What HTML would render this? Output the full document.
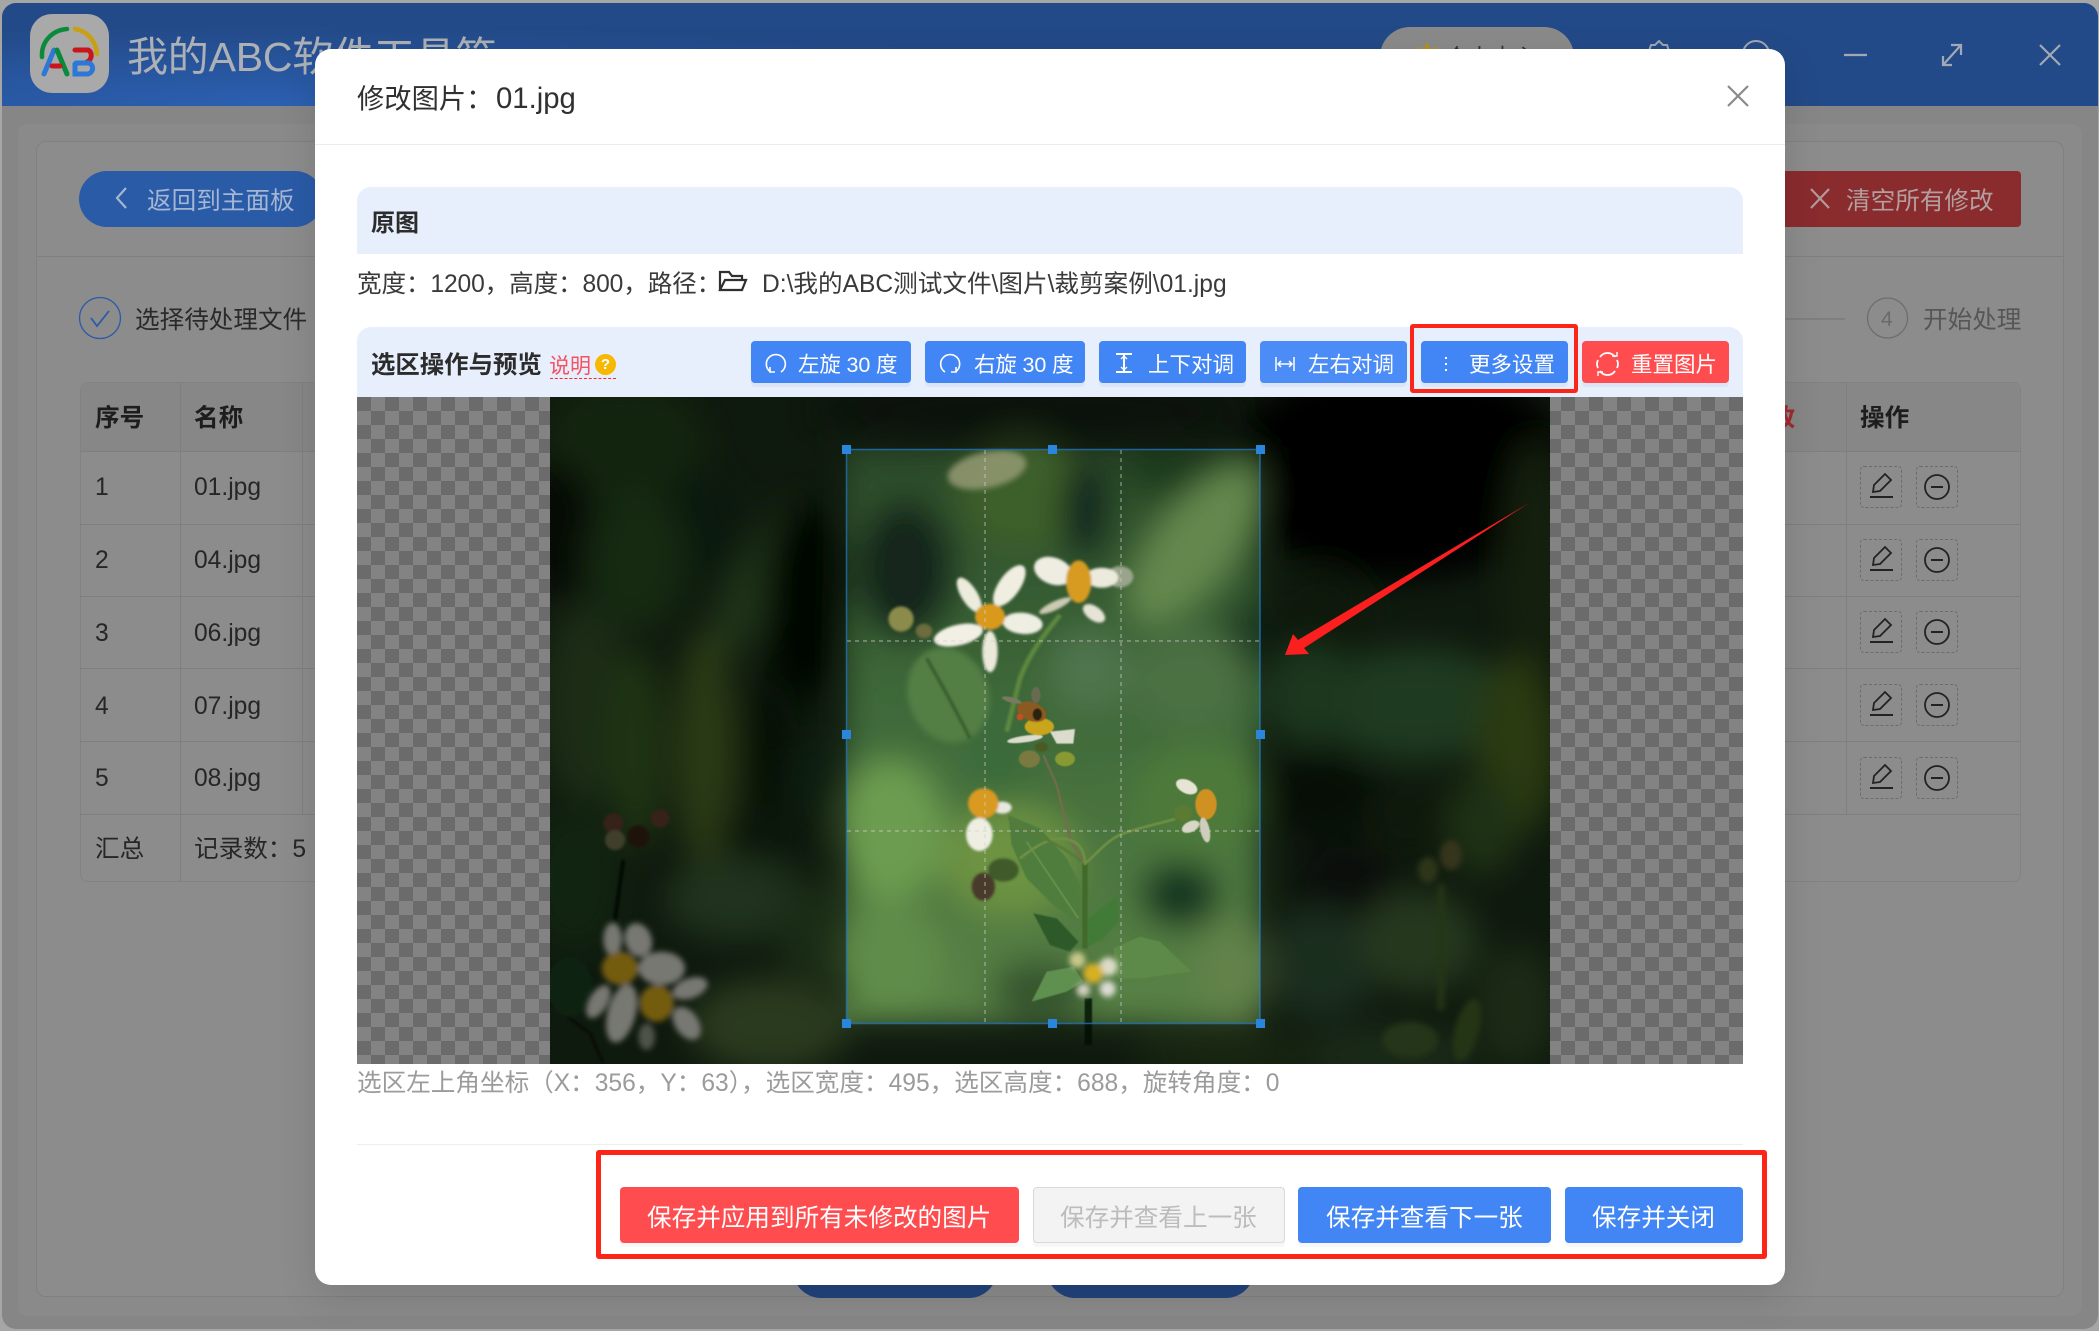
<!DOCTYPE html>
<html lang="zh"><head><meta charset="utf-8"><title>修改图片</title>
<style>
html,body{margin:0;padding:0;background:#a6a6a6}
body{position:relative;width:2099px;height:1331px;overflow:hidden;font-family:"Liberation Sans","Noto Sans CJK SC",sans-serif;color:#262626}
.a{position:absolute}
.t{position:absolute;white-space:nowrap;line-height:40px;font-size:24.6px;margin-top:2.5px}
.b{font-weight:700}
.btn{position:absolute;border-radius:4px;box-shadow:0 4px 0 rgba(60,100,180,.07)}
.line{position:absolute;background:#7f7f7f}
.act{position:absolute;width:42px;height:42px;box-sizing:border-box;border:1px dashed #6c6c6c;border-radius:4px}
svg{position:absolute;overflow:visible}
</style></head><body>

<!-- background window -->
<div class="a" style="left:2px;top:3px;width:2096px;height:1326px;border-radius:14px;background:#868686;overflow:hidden">
  <div class="a" style="left:0;top:0;width:100%;height:103px;background:radial-gradient(ellipse 900px 80px at 300px 103px,#2c60b2,rgba(44,96,178,0)),#234a88"></div>
  <div class="a" style="left:16px;top:121px;width:2064px;height:1192px;background:#8a8a8a;border-radius:10px"></div>
  <div class="a" style="left:34px;top:138px;width:2028px;height:1156px;background:#8c8c8c;border:1px solid #808080;border-radius:10px;box-sizing:border-box"></div>
</div>
<div class="line" style="left:36px;top:256px;width:2028px;height:1px"></div>

<!-- logo -->
<div class="a" style="left:30px;top:14px;width:79px;height:79px;border-radius:22px;background:#a9a9a9"></div>
<svg style="left:0;top:0" width="130" height="100" fill="none" stroke-linecap="round">
  <path d="M42 57C41 41 53 30 67 29" stroke="#0a8a3a" stroke-width="4.5"/>
  <path d="M75 29C88 31 96 42 97 54" stroke="#c9a012" stroke-width="4.5"/>
  <path d="M44 74L54 50" stroke="#2c78d8" stroke-width="5"/>
  <path d="M57 50L67 74" stroke="#0a8a3a" stroke-width="5"/>
  <path d="M52 66H60" stroke="#c8161c" stroke-width="5"/>
  <path d="M75 50H88C93 52 92 60 87 62" stroke="#c8161c" stroke-width="5"/>
  <path d="M75 64V74H88C94 72 94 65 89 63H76" stroke="#2c78d8" stroke-width="5"/>
</svg>
<div class="t" style="left:127px;top:34px;font-size:41px;color:#adb1b6;letter-spacing:-.2px">我的ABC软件工具箱</div>

<!-- header right -->
<div class="a" style="left:1380px;top:27px;width:194px;height:60px;border-radius:30px;background:#8a8a8a"></div>
<div class="t" style="left:1445px;top:34px;font-size:23px;color:#333">个人中心</div>
<svg style="left:1414px;top:40px" width="26" height="14"><path d="M2 14L4 6L9 10L13 2L17 10L22 6L24 14Z" fill="#b8901e"/></svg>
<svg style="left:1640px;top:38px" width="140" height="20" fill="none" stroke="#9fa6b2" stroke-width="2"><path d="M8 16L11 7H15L19 3L23 7H27L30 16"/><circle cx="116" cy="16" r="13"/></svg>
<svg style="left:1840px;top:40px" width="230" height="30" fill="none" stroke="#a3a9b4" stroke-width="2.2">
  <path d="M4 15H27"/>
  <path d="M103 25L121 5M111 5H121V15M103 16V25H112"/>
  <path d="M200 5L220 25M220 5L200 25"/>
</svg>

<!-- toolbar behind -->
<div class="a" style="left:79px;top:171px;width:244px;height:56px;border-radius:28px;background:#2a5ba7"></div>
<svg style="left:112px;top:185px" width="20" height="26" fill="none" stroke="#a4b6d3" stroke-width="2.2"><path d="M14 3L5 13L14 23"/></svg>
<div class="t" style="left:147px;top:179px;color:#a4b6d3">返回到主面板</div>
<div class="a" style="left:1700px;top:171px;width:321px;height:56px;border-radius:4px;background:#8a2b2e"></div>
<svg style="left:1808px;top:187px" width="24" height="24" fill="none" stroke="#b39a9a" stroke-width="2.2"><path d="M3 2L21 21M21 2L3 21"/></svg>
<div class="t" style="left:1846px;top:179px;color:#b39f9f">清空所有修改</div>

<!-- steps -->
<svg style="left:78px;top:296px" width="44" height="44" fill="none"><circle cx="22" cy="22" r="20.5" stroke="#2a5ba7" stroke-width="1.3"/><path d="M13 22L19 30L31 15" stroke="#2a5ba7" stroke-width="1.800"/></svg>
<div class="t" style="left:135px;top:298px;color:#2a2a2a">选择待处理文件</div>
<div class="line" style="left:1780px;top:318px;width:65px;height:2px"></div>
<svg style="left:1866px;top:297px" width="44" height="44" fill="none"><circle cx="21.500" cy="21" r="20" stroke="#6e6e6e" stroke-width="1.3"/></svg>
<div class="t" style="left:1881px;top:297px;font-size:21px;color:#6a6a6a">4</div>
<div class="t" style="left:1923px;top:298px;color:#565656">开始处理</div>

<!-- table -->
<div class="a" style="left:80px;top:382px;width:1941px;height:500px;box-sizing:border-box;border:1px solid #828282;border-radius:8px;background:#8c8c8c"></div>
<div class="a" style="left:81px;top:383px;width:1939px;height:68px;background:#878787;border-radius:8px 8px 0 0"></div>
<div class="line" style="left:80px;top:451px;width:1941px;height:1px"></div>
<div class="line" style="left:80px;top:524px;width:1941px;height:1px"></div>
<div class="line" style="left:80px;top:596px;width:1941px;height:1px"></div>
<div class="line" style="left:80px;top:668px;width:1941px;height:1px"></div>
<div class="line" style="left:80px;top:741px;width:1941px;height:1px"></div>
<div class="line" style="left:80px;top:814px;width:1941px;height:1px"></div>
<div class="line" style="left:180px;top:382px;width:1px;height:500px"></div>
<div class="line" style="left:302px;top:382px;width:1px;height:432px"></div>
<div class="line" style="left:1846px;top:382px;width:1px;height:432px"></div>
<div class="t b" style="left:95px;top:396px;color:#1d1d1d">序号</div>
<div class="t b" style="left:194px;top:396px;color:#1d1d1d">名称</div>
<div class="t b" style="left:1746px;top:396px;color:#a02a30">修改</div>
<div class="t b" style="left:1860px;top:396px;color:#1d1d1d">操作</div>
<div class="t" style="left:95px;top:465px">1</div><div class="t" style="left:194px;top:465px">01.jpg</div>
<div class="t" style="left:95px;top:538px">2</div><div class="t" style="left:194px;top:538px">04.jpg</div>
<div class="t" style="left:95px;top:611px">3</div><div class="t" style="left:194px;top:611px">06.jpg</div>
<div class="t" style="left:95px;top:684px">4</div><div class="t" style="left:194px;top:684px">07.jpg</div>
<div class="t" style="left:95px;top:756px">5</div><div class="t" style="left:194px;top:756px">08.jpg</div>
<div class="t" style="left:95px;top:827px">汇总</div><div class="t" style="left:194px;top:827px">记录数：5</div>

<div class="act" style="left:1860px;top:466px"></div><div class="act" style="left:1916px;top:466px"></div>
<div class="act" style="left:1860px;top:539px"></div><div class="act" style="left:1916px;top:539px"></div>
<div class="act" style="left:1860px;top:611px"></div><div class="act" style="left:1916px;top:611px"></div>
<div class="act" style="left:1860px;top:684px"></div><div class="act" style="left:1916px;top:684px"></div>
<div class="act" style="left:1860px;top:757px"></div><div class="act" style="left:1916px;top:757px"></div>
<svg style="left:1860px;top:466px" width="100" height="340" fill="none" stroke="#222" stroke-width="1.8">
  <g><path d="M10 31H33" stroke-width="2"/><path d="M13 26L14 19L25 8L31 14L20 25Z"/><circle cx="77" cy="21" r="12"/><path d="M71 21H83" stroke-width="2"/></g>
  <g transform="translate(0,73)"><path d="M10 31H33" stroke-width="2"/><path d="M13 26L14 19L25 8L31 14L20 25Z"/><circle cx="77" cy="21" r="12"/><path d="M71 21H83" stroke-width="2"/></g>
  <g transform="translate(0,145)"><path d="M10 31H33" stroke-width="2"/><path d="M13 26L14 19L25 8L31 14L20 25Z"/><circle cx="77" cy="21" r="12"/><path d="M71 21H83" stroke-width="2"/></g>
  <g transform="translate(0,218)"><path d="M10 31H33" stroke-width="2"/><path d="M13 26L14 19L25 8L31 14L20 25Z"/><circle cx="77" cy="21" r="12"/><path d="M71 21H83" stroke-width="2"/></g>
  <g transform="translate(0,291)"><path d="M10 31H33" stroke-width="2"/><path d="M13 26L14 19L25 8L31 14L20 25Z"/><circle cx="77" cy="21" r="12"/><path d="M71 21H83" stroke-width="2"/></g>
</svg>

<!-- bottom blue buttons behind -->
<div class="a" style="left:793px;top:1230px;width:204px;height:68px;border-radius:28px;background:#22437c"></div>
<div class="a" style="left:1047px;top:1230px;width:207px;height:68px;border-radius:28px;background:#22437c"></div>

<!-- modal -->
<div class="a" style="left:315px;top:49px;width:1470px;height:1236px;background:#fff;border-radius:16px;box-shadow:0 12px 40px rgba(0,0,0,.12)"></div>
<div class="t" style="left:357px;top:76px;font-size:27.300px;color:#303030">修改图片：</div>
<div class="t" style="left:496px;top:76px;font-size:29.300px;color:#303030">01.jpg</div>
<svg style="left:1726px;top:85px" width="24" height="22" fill="none" stroke="#8a8a8a" stroke-width="2.2"><path d="M2 1L22 21M22 1L2 21"/></svg>
<div class="a" style="left:315px;top:144px;width:1470px;height:1px;background:#ececec"></div>

<div class="a" style="left:357px;top:187px;width:1386px;height:67px;background:#e8effc;border-radius:14px 14px 0 0"></div>
<div class="t b" style="left:371px;top:201px;font-size:24px;color:#2c2c2c">原图</div>
<div class="t" style="left:357px;top:262px;color:#3a3a3a;letter-spacing:-.12px">宽度：1200，高度：800，路径：</div>
<svg style="left:718px;top:270px" width="30" height="22" fill="none" stroke="#2f2f2f" stroke-width="2.2"><path d="M2 20V2H11L14 6H24V10M2 20H24L28 10H7L2 20Z"/></svg>
<div class="t" style="left:762px;top:262px;color:#3a3a3a">D:\我的ABC测试文件\图片\裁剪案例\01.jpg</div>

<div class="a" style="left:357px;top:327px;width:1386px;height:72px;background:#e8effc;border-radius:14px 14px 0 0"></div>
<div class="t b" style="left:371px;top:343px;font-size:24.400px;color:#2c2c2c">选区操作与预览</div>
<div class="t" style="left:549px;top:344px;font-size:21px;color:#f5515f">说明</div>
<div class="a" style="left:595px;top:354px;width:21px;height:21px;border-radius:50%;background:#f6b800;color:#fff;font-size:15px;line-height:21px;text-align:center;font-weight:700">?</div>
<div class="a" style="left:550px;top:378px;width:66px;border-top:1.500px dashed #ef2b2b"></div>

<!-- buttons -->
<div class="btn" style="left:751px;top:341px;width:160px;height:42px;background:#4285f5"></div>
<div class="btn" style="left:925px;top:341px;width:160px;height:42px;background:#4285f5"></div>
<div class="btn" style="left:1099px;top:341px;width:147px;height:42px;background:#4285f5"></div>
<div class="btn" style="left:1260px;top:341px;width:147px;height:42px;background:#4c8cf6"></div>
<div class="btn" style="left:1421px;top:341px;width:147px;height:42px;background:#4285f5"></div>
<div class="btn" style="left:1582px;top:341px;width:147px;height:42px;background:#ff4d4f"></div>
<div class="t" style="left:798px;top:342px;font-size:21.500px;color:#fff;letter-spacing:-.15px">左旋 30 度</div>
<div class="t" style="left:974px;top:342px;font-size:21.500px;color:#fff;letter-spacing:-.15px">右旋 30 度</div>
<div class="t" style="left:1148px;top:342px;font-size:21.500px;color:#fff">上下对调</div>
<div class="t" style="left:1308px;top:342px;font-size:21.500px;color:#fff">左右对调</div>
<div class="t" style="left:1469px;top:342px;font-size:21.500px;color:#fff">更多设置</div>
<div class="t" style="left:1631px;top:342px;font-size:21.500px;color:#fff">重置图片</div>
<svg style="left:760px;top:345px" width="880" height="34" fill="none" stroke="#fff" stroke-width="1.600">
  <path d="M21 27A9.500 9.500 0 1 0 10 26.500"/><path d="M10 22V27H15"/>
  <path d="M185 27A9.500 9.500 0 1 1 196 26.500"/><path d="M196 22V27H191"/>
  <path d="M356 9H372M356 27H372M364 10V26" stroke-width="2"/>
  <path d="M361 14L364 11L367 14M361 22L364 25L367 22" stroke-width="1.300"/>
  <path d="M516 12V26M534 12V26M518 19H532M521 16L518 19L521 22M529 16L532 19L529 22" stroke-width="1.500"/>
  <path d="M686 12V14M686 18V20M686 24V26" stroke-width="2"/>
  <path d="M840 12A9 9 0 0 1 855 12M855 26A9 9 0 0 1 840 26M838 15A9 9 0 0 0 838 23M857 15A9 9 0 0 1 857 23" stroke-width="1.800"/>
  <path d="M852 11H857V7M843 27H838V31" stroke-width="1.400"/>
</svg>

<!-- image area -->
<svg style="left:357px;top:397px" width="1386" height="667" viewBox="357 397 1386 667">
  <defs>
    <pattern id="chk" x="357" y="397" width="28" height="28" patternUnits="userSpaceOnUse">
      <rect width="28" height="28" fill="#838383"/><rect width="14" height="14" fill="#6b6b6b"/><rect x="14" y="14" width="14" height="14" fill="#6b6b6b"/>
    </pattern>
    <linearGradient id="ins" x1="0" y1="0" x2="0" y2="1"><stop offset="0" stop-color="#2b4a28"/><stop offset=".45" stop-color="#3f6a3a"/><stop offset="1" stop-color="#5a8346"/></linearGradient>
    <clipPath id="ph"><rect x="550" y="397" width="1000" height="667"/></clipPath>
    <filter id="bg" filterUnits="userSpaceOnUse" x="-2000" y="-2000" width="6000" height="6000"><feGaussianBlur stdDeviation="16"/></filter>
    <filter id="bb" filterUnits="userSpaceOnUse" x="-2000" y="-2000" width="6000" height="6000"><feGaussianBlur stdDeviation="3"/></filter>
    <filter id="bm" filterUnits="userSpaceOnUse" x="-2000" y="-2000" width="6000" height="6000"><feGaussianBlur stdDeviation="9"/></filter>
    <filter id="bs" filterUnits="userSpaceOnUse" x="-2000" y="-2000" width="6000" height="6000"><feGaussianBlur stdDeviation="4"/></filter>
    <filter id="bx" filterUnits="userSpaceOnUse" x="-2000" y="-2000" width="6000" height="6000"><feGaussianBlur stdDeviation="1.500"/></filter>
  </defs>
  <rect x="357" y="397" width="1386" height="667" fill="url(#chk)"/>
  <g clip-path="url(#ph)">
    <rect x="550" y="397" width="1000" height="667" fill="#1e341c"/>
    <g filter="url(#bg)">
      <!-- outside: left -->
      <ellipse cx="625" cy="443" rx="80" ry="60" fill="#264a1e"/>
      <ellipse cx="555" cy="530" rx="40" ry="70" fill="#0a140a"/>
      <ellipse cx="755" cy="586" rx="26" ry="100" fill="#3c6830" transform="rotate(30 755 586)"/>
      <ellipse cx="702" cy="530" rx="40" ry="60" fill="#14321a"/>
      <ellipse cx="637" cy="560" rx="50" ry="70" fill="#2a5424"/>
      <ellipse cx="805" cy="600" rx="40" ry="100" fill="#040804"/>
      <ellipse cx="705" cy="750" rx="30" ry="120" fill="#54742a"/>
      <ellipse cx="585" cy="704" rx="44" ry="100" fill="#38582a"/>
      <ellipse cx="637" cy="750" rx="28" ry="100" fill="#3e6828"/>
      <ellipse cx="768" cy="750" rx="30" ry="70" fill="#0c2010"/>
      <ellipse cx="768" cy="834" rx="50" ry="30" fill="#182e18"/>
      <ellipse cx="820" cy="777" rx="30" ry="40" fill="#1c3c20"/>
      <ellipse cx="735" cy="899" rx="70" ry="40" fill="#40663a"/>
      <ellipse cx="820" cy="930" rx="44" ry="50" fill="#34582c"/>
      <ellipse cx="770" cy="1025" rx="80" ry="46" fill="#54743c"/>
      <ellipse cx="575" cy="880" rx="44" ry="70" fill="#244820"/>
      <!-- outside: top / right -->
      <ellipse cx="1030" cy="410" rx="220" ry="30" fill="#142414"/>
      <ellipse cx="1400" cy="470" rx="170" ry="110" fill="#030303"/>
      <ellipse cx="1535" cy="560" rx="30" ry="120" fill="#2a401e"/>
      <ellipse cx="1320" cy="617" rx="50" ry="50" fill="#1c3018"/>
      <ellipse cx="1418" cy="704" rx="100" ry="56" fill="#3e7440"/>
      <ellipse cx="1310" cy="695" rx="44" ry="50" fill="#386e3a"/>
      <ellipse cx="1516" cy="747" rx="40" ry="90" fill="#547424"/>
      <ellipse cx="1320" cy="795" rx="56" ry="44" fill="#0c1c0c"/>
      <ellipse cx="1410" cy="815" rx="40" ry="40" fill="#1c3018"/>
      <ellipse cx="1483" cy="825" rx="36" ry="50" fill="#3c642c"/>
      <ellipse cx="1345" cy="880" rx="50" ry="40" fill="#141c14"/>
      <ellipse cx="1320" cy="964" rx="56" ry="56" fill="#345c3c"/>
      <ellipse cx="1418" cy="942" rx="60" ry="50" fill="#4c703e"/>
      <ellipse cx="1516" cy="1007" rx="40" ry="60" fill="#38542c"/>
      <ellipse cx="1223" cy="1055" rx="90" ry="28" fill="#2e4824"/>
      <ellipse cx="1390" cy="1055" rx="90" ry="28" fill="#345430"/>
      <!-- inside -->
      <rect x="846" y="450" width="414" height="574" fill="url(#ins)"/>
      <ellipse cx="905" cy="570" rx="50" ry="70" fill="#12281a"/>
      <ellipse cx="1020" cy="490" rx="60" ry="60" fill="#3c5e2a"/>
      <ellipse cx="1085" cy="510" rx="22" ry="50" fill="#0e241a"/>
      <ellipse cx="1180" cy="470" rx="60" ry="24" fill="#1a3a1e"/>
      <ellipse cx="1195" cy="545" rx="40" ry="95" fill="#64884e" transform="rotate(38 1195 545)"/>
      <ellipse cx="1250" cy="640" rx="26" ry="40" fill="#1c3a20"/>
      <ellipse cx="1090" cy="670" rx="40" ry="40" fill="#50744e"/>
      <ellipse cx="1190" cy="680" rx="60" ry="50" fill="#4c7042"/>
      <ellipse cx="890" cy="830" rx="54" ry="70" fill="#6c9c50"/>
      <ellipse cx="1010" cy="860" rx="70" ry="56" fill="#6c9242"/>
      <ellipse cx="1200" cy="800" rx="66" ry="56" fill="#4d7a3a"/>
      <ellipse cx="1180" cy="895" rx="40" ry="34" fill="#183820"/>
      <ellipse cx="1235" cy="970" rx="40" ry="50" fill="#628248"/>
      <ellipse cx="890" cy="960" rx="54" ry="60" fill="#5e8c4a"/>
      <ellipse cx="1040" cy="990" rx="50" ry="30" fill="#34542e"/>
      <ellipse cx="1000" cy="760" rx="30" ry="36" fill="#3a6a3a"/>
    </g>
    <!-- selection top blur -->
    <ellipse cx="987" cy="470" rx="40" ry="18" transform="rotate(-12 987 470)" fill="#9a9e78" opacity=".8" filter="url(#bb)"/>
    <!-- flower group top -->
    <g transform="translate(840,445) scale(.33333)">
      <g filter="url(#bm)"><ellipse cx="325" cy="750" rx="120" ry="145" transform="rotate(-20 325 750)" fill="#527f44"/></g>
      <g filter="url(#bs)">
        <path d="M660 510C620 560 570 620 540 700L500 860" stroke="#5f8a40" stroke-width="14" fill="none"/>
        <path d="M260 640C300 710 350 800 390 880" stroke="#355a2c" stroke-width="9" fill="none"/>
        <ellipse cx="183" cy="522" rx="38" ry="38" fill="#8b8b4c"/><ellipse cx="252" cy="558" rx="25" ry="22" fill="#6c6c3e"/>
        <ellipse cx="508" cy="422" rx="32" ry="72" transform="rotate(35 508 422)" fill="#f0eee0"/>
        <ellipse cx="388" cy="450" rx="24" ry="60" transform="rotate(-32 388 450)" fill="#ecebdc"/>
        <ellipse cx="355" cy="570" rx="75" ry="31" transform="rotate(-13 355 570)" fill="#f2f0e4"/>
        <ellipse cx="450" cy="620" rx="23" ry="62" fill="#ebe9da"/>
        <ellipse cx="548" cy="535" rx="60" ry="32" transform="rotate(5 548 535)" fill="#efeee2"/>
        <ellipse cx="450" cy="515" rx="45" ry="39" fill="#d99a1c"/>
        <ellipse cx="840" cy="395" rx="40" ry="32" fill="#9aa48a"/>
        <ellipse cx="640" cy="378" rx="60" ry="40" transform="rotate(20 640 378)" fill="#efede2"/>
        <ellipse cx="785" cy="398" rx="50" ry="30" fill="#eceadc"/>
        <ellipse cx="645" cy="482" rx="52" ry="13" transform="rotate(-25 645 482)" fill="#cbcab2"/>
        <ellipse cx="762" cy="505" rx="38" ry="21" transform="rotate(35 762 505)" fill="#e6e4d6"/>
        <ellipse cx="716" cy="410" rx="38" ry="64" fill="#d79b20"/>
      </g>
      <g filter="url(#bx)">
        <ellipse cx="555" cy="882" rx="54" ry="10" transform="rotate(-8 555 882)" fill="#dcdccc"/>
        <path d="M630 860L705 852L700 896H650Z" fill="#dcdccc"/>
        <ellipse cx="598" cy="845" rx="44" ry="26" fill="#c9a51a"/>
        <ellipse cx="575" cy="800" rx="46" ry="28" transform="rotate(20 575 800)" fill="#8a5a20"/>
        <ellipse cx="592" cy="808" rx="14" ry="18" fill="#2a2010"/>
        <circle cx="540" cy="816" r="10" fill="#c8501a"/>
        <ellipse cx="515" cy="765" rx="30" ry="8" transform="rotate(15 515 765)" fill="#7a7a62"/>
        <ellipse cx="588" cy="750" rx="14" ry="24" fill="#6a6a52"/>
      </g>
    </g>
    <!-- flower group bottom -->
    <g transform="translate(840,745) scale(.33333)">
      <g filter="url(#bx)">
        <path d="M610 30L650 120L690 280L730 350" stroke="#7a6a50" stroke-width="6" fill="none"/>
        <path d="M505 210L600 250L680 340L720 420L715 530L640 480L560 400L515 300Z" fill="#4f7d3e"/>
        <path d="M560 290L715 520" stroke="#74a058" stroke-width="3" fill="none"/>
        <path d="M580 505L650 520L715 590L690 620L630 600Z" fill="#2f5a2c"/>
        <path d="M830 455L835 530L790 580L745 605L745 520Z" fill="#437a38"/>
        <path d="M820 610L900 575L960 590L1055 680L900 700L830 700Z" fill="#5d8a4a"/>
        <path d="M575 770L620 680L700 665L730 710L680 740Z" fill="#5f9050"/>
        <path d="M735 355V610" stroke="#3f6a2a" stroke-width="16" fill="none"/>
        <path d="M745 760V900" stroke="#10200f" stroke-width="22" fill="none"/>
        <path d="M735 355C770 330 800 280 860 262C910 245 960 235 1005 222" stroke="#6f8f45" stroke-width="8" fill="none"/>
        <path d="M540 340C590 300 640 270 690 285C720 295 735 320 735 360" stroke="#6f9045" stroke-width="8" fill="none"/>
        <path d="M505 220C560 265 640 280 725 350" stroke="#5a7a3a" stroke-width="8" fill="none"/>
        <ellipse cx="675" cy="42" rx="30" ry="22" fill="#8a9a30"/>
        <ellipse cx="568" cy="42" rx="32" ry="26" fill="#7a7a40"/>
        <ellipse cx="605" cy="6" rx="20" ry="14" fill="#4a5a20"/>
        <ellipse cx="1040" cy="125" rx="34" ry="20" transform="rotate(25 1040 125)" fill="#e6e4d4"/>
        <ellipse cx="1030" cy="205" rx="28" ry="24" fill="#5c7a30"/>
        <ellipse cx="1098" cy="178" rx="32" ry="46" fill="#cf9220"/>
        <ellipse cx="1052" cy="245" rx="28" ry="16" transform="rotate(-25 1052 245)" fill="#d8d6c4"/>
        <ellipse cx="1095" cy="255" rx="14" ry="38" transform="rotate(-12 1095 255)" fill="#cfcdbc"/>
      </g>
      <g filter="url(#bs)">
        <ellipse cx="418" cy="268" rx="40" ry="50" fill="#eeeee2"/>
        <ellipse cx="487" cy="188" rx="28" ry="18" fill="#e8e8e0"/>
        <ellipse cx="430" cy="175" rx="46" ry="45" fill="#d99a20"/>
        <ellipse cx="430" cy="425" rx="35" ry="42" fill="#4a3a2a"/>
        <ellipse cx="490" cy="375" rx="46" ry="35" fill="#3f5a2a"/>
      </g>
      <g filter="url(#bm)">
        <circle cx="712" cy="645" r="24" fill="#c8c88a"/>
        <circle cx="805" cy="665" r="28" fill="#dcdcc6"/>
        <circle cx="730" cy="735" r="20" fill="#d0d0c0"/>
        <circle cx="803" cy="732" r="24" fill="#dcdcd4"/>
        <ellipse cx="760" cy="685" rx="30" ry="30" fill="#d8b020"/>
      </g>
    </g>
    <!-- bottom-left flowers -->
    <g transform="translate(550,780) scale(.33333)">
      <g filter="url(#bs)">
        <path d="M220 240L195 420" stroke="#060806" stroke-width="10" fill="none"/>
        <path d="M0 670L120 760L160 850" stroke="#14140c" stroke-width="8" fill="none"/>
        <ellipse cx="60" cy="620" rx="66" ry="90" fill="#1e4420"/>
        <circle cx="190" cy="130" r="30" fill="#6a4432"/><circle cx="265" cy="170" r="34" fill="#3c2618"/><circle cx="330" cy="115" r="28" fill="#6e4432"/><circle cx="195" cy="180" r="30" fill="#7e7e56"/>
      </g>
      <g filter="url(#bm)" fill="#f0f0e6">
        <ellipse cx="188" cy="478" rx="28" ry="50"/>
        <ellipse cx="265" cy="480" rx="40" ry="52" transform="rotate(-20 265 480)"/>
        <ellipse cx="335" cy="565" rx="70" ry="50"/>
        <ellipse cx="420" cy="625" rx="55" ry="30" transform="rotate(-20 420 625)"/>
        <ellipse cx="410" cy="730" rx="35" ry="55" transform="rotate(-35 410 730)"/>
        <ellipse cx="215" cy="700" rx="42" ry="90" transform="rotate(15 215 700)"/>
        <ellipse cx="145" cy="665" rx="28" ry="55" transform="rotate(30 145 665)"/>
        <ellipse cx="290" cy="770" rx="25" ry="40" opacity=".6"/>
        <ellipse cx="210" cy="565" rx="55" ry="50" fill="#e8b91e"/>
        <ellipse cx="320" cy="670" rx="52" ry="55" fill="#e8b91e"/>
      </g>
    </g>
    <!-- right buds -->
    <g filter="url(#bb)">
      <ellipse cx="1451" cy="855" rx="11" ry="15" fill="#6a6a38"/><ellipse cx="1428" cy="870" rx="10" ry="13" fill="#5a6a30"/>
      <path d="M1441 885L1441 1010" stroke="#4a6a2a" stroke-width="7" fill="none"/>
      <ellipse cx="1467" cy="1030" rx="12" ry="32" fill="#4a6a2c" transform="rotate(15 1467 1030)"/>
      <ellipse cx="1410" cy="1040" rx="28" ry="18" fill="#4a6a30"/>
    </g>
    <path d="M550 397H1550V1064H550ZM847 450V1023H1260V450Z" fill="#000" fill-opacity=".5" fill-rule="evenodd"/>
  </g>
  <!-- selection -->
  <path d="M985 450V1023M1121 450V1023M847 641H1260M847 831H1260" stroke="#d2d2d2" stroke-width="1.200" stroke-dasharray="4 4" stroke-opacity=".6" fill="none"/>
  <rect x="846.500" y="449.500" width="413.500" height="574" fill="none" stroke="#2481d8" stroke-width="1.500" stroke-opacity=".7"/>
  <g fill="#2a86dc">
    <rect x="842" y="445" width="9" height="9"/><rect x="1048" y="445" width="9" height="9"/><rect x="1256" y="445" width="9" height="9"/>
    <rect x="842" y="730" width="9" height="9"/><rect x="1256" y="730" width="9" height="9"/>
    <rect x="842" y="1019" width="9" height="9"/><rect x="1048" y="1019" width="9" height="9"/><rect x="1256" y="1019" width="9" height="9"/>
  </g>
  <path d="M1529 503L1304 648L1309 654L1285 655L1293 634L1298 640Z" fill="#fb1f1f"/>
</svg>

<div class="t" style="left:357px;top:1061px;color:#9b9b9b">选区左上角坐标（X：356，Y：63），选区宽度：495，选区高度：688，旋转角度：0</div>
<div class="a" style="left:357px;top:1144px;width:1386px;height:1px;background:#eeeeee"></div>

<!-- footer buttons -->
<div class="btn" style="left:620px;top:1187px;width:399px;height:56px;background:#ff4d4f;box-shadow:0 4px 0 rgba(0,0,0,.03)"></div>
<div class="btn" style="left:1033px;top:1187px;width:252px;height:56px;background:#f3f3f3;box-sizing:border-box;border:1px solid #d9d9d9;box-shadow:0 4px 0 rgba(0,0,0,.03)"></div>
<div class="btn" style="left:1298px;top:1187px;width:253px;height:56px;background:#4285f5;box-shadow:0 4px 0 rgba(0,0,0,.03)"></div>
<div class="btn" style="left:1565px;top:1187px;width:178px;height:56px;background:#4285f5;box-shadow:0 4px 0 rgba(0,0,0,.03)"></div>
<div class="t" style="left:647px;top:1196px;color:#fff">保存并应用到所有未修改的图片</div>
<div class="t" style="left:1060px;top:1196px;color:#bcbcbc">保存并查看上一张</div>
<div class="t" style="left:1326px;top:1196px;color:#fff">保存并查看下一张</div>
<div class="t" style="left:1592px;top:1196px;color:#fff">保存并关闭</div>

<!-- annotation boxes -->
<div class="a" style="left:1410px;top:324px;width:168px;height:69px;box-sizing:border-box;border:4.500px solid #fd2418;border-radius:3px"></div>
<div class="a" style="left:596px;top:1150px;width:1171px;height:109px;box-sizing:border-box;border:5px solid #fd2418;border-radius:3px"></div>

</body></html>
